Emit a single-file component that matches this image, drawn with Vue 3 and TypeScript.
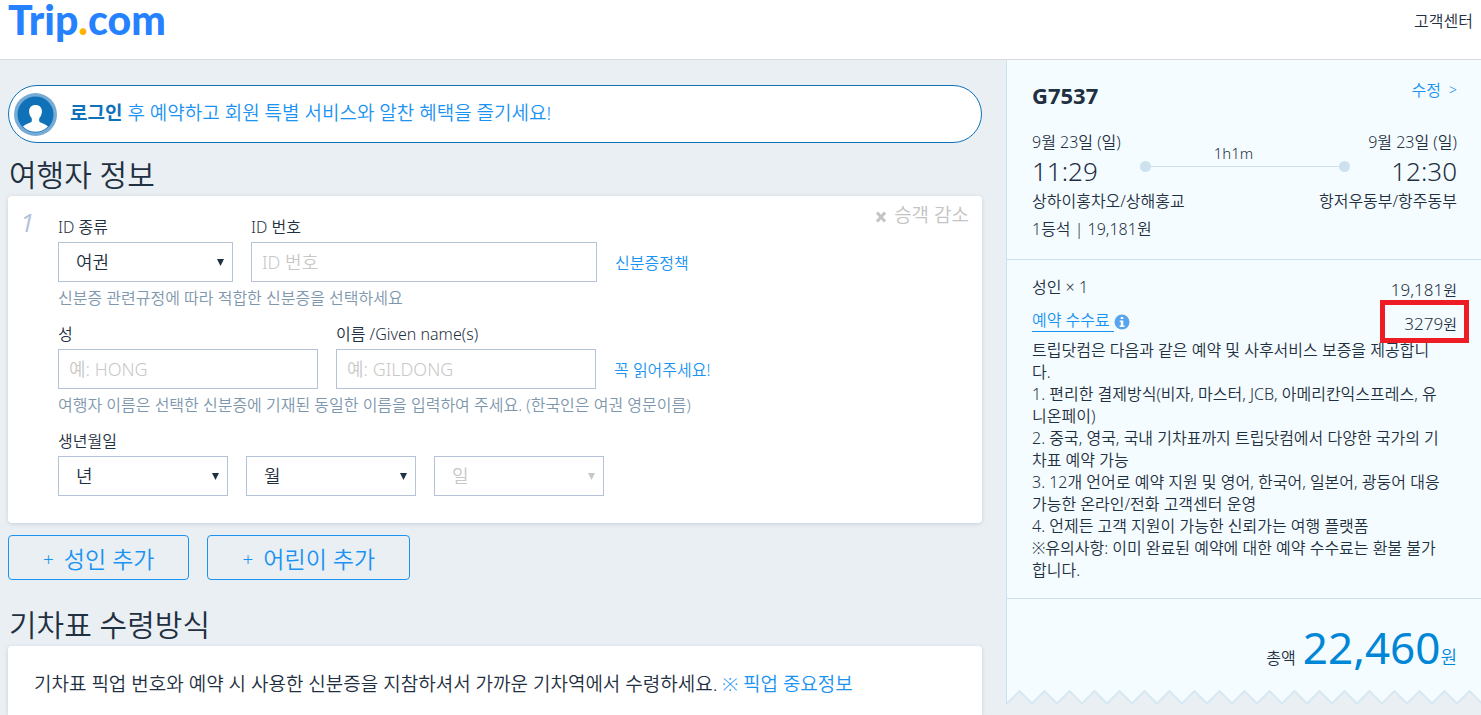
<script setup lang="ts">
import { ref } from 'vue'

const idType = ref('여권')
const year = ref('')
const month = ref('')
const day = ref('')

const guarantee: string[] = [
  '트립닷컴은 다음과 같은 예약 및 사후서비스 보증을 제공합니',
  '다.',
  '1. 편리한 결제방식(비자, 마스터, JCB, 아메리칸익스프레스, 유',
  '니온페이)',
  '2. 중국, 영국, 국내 기차표까지 트립닷컴에서 다양한 국가의 기',
  '차표 예약 가능',
  '3. 12개 언어로 예약 지원 및 영어, 한국어, 일본어, 광둥어 대응',
  '가능한 온라인/전화 고객센터 운영',
  '4. 언제든 고객 지원이 가능한 신뢰가는 여행 플랫폼',
  '※유의사항: 이미 완료된 예약에 대한 예약 수수료는 환불 불가',
  '합니다.',
]
</script>

<template>
  <div class="page">
    <header class="header">
      <a class="logo" href="#">Trip<span class="dot">.</span>com</a>
      <a class="support" href="#">고객센터</a>
    </header>

    <div class="layout">
      <main class="content">
        <div class="banner">
          <svg class="avatar" viewBox="0 0 43 43" aria-hidden="true">
            <circle cx="21.500" cy="21.500" r="21.500" fill="#76abd5" />
            <circle cx="21.500" cy="21.500" r="18" fill="#0f72b9" />
            <path
              d="M21.500 12c-4.200 0-6.500 2.800-6.400 6.400.1 3 1 4.600 2.200 6.100.7 1 .8 3.300.2 4.300-.8 1.300-5.500 1.700-8.500 4.700a17.500 17.500 0 0 0 25 0c-3-3-7.700-3.400-8.500-4.700-.6-1-.5-3.300.2-4.300 1.200-1.500 2.100-3.100 2.200-6.100.1-3.600-2.200-6.400-6.400-6.400z"
              fill="#fff"
            />
          </svg>
          <p><a class="login" href="#">로그인</a> 후 예약하고 회원 특별 서비스와 알찬 혜택을 즐기세요!</p>
        </div>

        <h2 class="title">여행자 정보</h2>
        <section class="card traveler">
          <span class="index">1</span>
          <button class="remove" type="button">
            <svg viewBox="0 0 12 12" aria-hidden="true"><path d="M2 1.500 10 10.500M10 1.500 2 10.500" stroke="#c4c4c4" stroke-width="3" /></svg>
            승객 감소
          </button>

          <div class="row">
            <div class="field id-type">
              <label for="id-type">ID 종류</label>
              <div class="select">
                <select id="id-type" v-model="idType"><option>여권</option></select>
                <svg viewBox="0 0 8 8" aria-hidden="true"><path d="M0 0h7L3.500 7z" /></svg>
              </div>
            </div>
            <div class="field id-number">
              <label for="id-number">ID 번호</label>
              <input id="id-number" type="text" placeholder="ID 번호" />
            </div>
            <a class="side-link" href="#">신분증정책</a>
          </div>
          <p class="hint">신분증 관련규정에 따라 적합한 신분증을 선택하세요</p>

          <div class="row">
            <div class="field name">
              <label for="surname">성</label>
              <input id="surname" type="text" placeholder="예: HONG" />
            </div>
            <div class="field name">
              <label for="given">이름 /Given name(s)</label>
              <input id="given" type="text" placeholder="예: GILDONG" />
            </div>
            <a class="side-link" href="#">꼭 읽어주세요!</a>
          </div>
          <p class="hint">여행자 이름은 선택한 신분증에 기재된 동일한 이름을 입력하여 주세요. (한국인은 여권 영문이름)</p>

          <label class="birth-label" for="year">생년월일</label>
          <div class="row">
            <div class="select date">
              <select id="year" v-model="year"><option value="">년</option></select>
              <svg viewBox="0 0 8 8" aria-hidden="true"><path d="M0 0h7L3.500 7z" /></svg>
            </div>
            <div class="select date">
              <select v-model="month" aria-label="월"><option value="">월</option></select>
              <svg viewBox="0 0 8 8" aria-hidden="true"><path d="M0 0h7L3.500 7z" /></svg>
            </div>
            <div class="select date disabled">
              <select v-model="day" aria-label="일" disabled><option value="">일</option></select>
              <svg viewBox="0 0 8 8" aria-hidden="true"><path d="M0 0h7L3.500 7z" /></svg>
            </div>
          </div>
        </section>

        <div class="add-buttons">
          <button type="button"><span class="plus">+</span><span>성인 추가</span></button>
          <button type="button"><span class="plus">+</span><span>어린이 추가</span></button>
        </div>

        <h2 class="title">기차표 수령방식</h2>
        <section class="card pickup">
          <p>기차표 픽업 번호와 예약 시 사용한 신분증을 지참하셔서 가까운 기차역에서 수령하세요. <a href="#">※ 픽업 중요정보</a></p>
        </section>
      </main>

      <aside class="summary">
        <section class="trip">
          <div class="train">
            <h3>G7537</h3>
            <a class="edit" href="#">수정<span class="gt">&gt;</span></a>
          </div>
          <div class="times">
            <div>
              <p>9월 23일 (일)</p>
              <p class="time">11:29</p>
            </div>
            <div class="duration">
              <span>1h1m</span>
              <div class="line"><i></i><i></i></div>
            </div>
            <div class="arrive">
              <p>9월 23일 (일)</p>
              <p class="time">12:30</p>
            </div>
          </div>
          <div class="stations"><span>상하이홍차오/상해홍교</span><span>항저우동부/항주동부</span></div>
          <p class="seat">1등석 | 19,181원</p>
        </section>

        <section class="prices">
          <div class="price"><span>성인 × 1</span><span class="amount">19,181<small>원</small></span></div>
          <div class="price">
            <a class="fee" href="#"><span>예약 수수료&nbsp;</span><svg viewBox="0 0 16 16" aria-hidden="true">
              <circle cx="8" cy="8" r="7.500" fill="#58a4ee" />
              <path d="M6.700 3h2.600v2H6.700zM5.700 6.500h3.600v5h1.200V13H5.600v-1.500h1.200V8H5.700z" fill="#fff" />
            </svg></a>
            <span class="amount marked">3279<small>원</small></span>
          </div>
          <p class="guarantee"><template v-for="line in guarantee" :key="line">{{ line }}<br /></template></p>
        </section>

        <section class="total"><span>총액</span><strong>22,460</strong><span class="won">원</span></section>

        <svg class="zigzag" aria-hidden="true">
          <defs>
            <pattern id="teeth" width="25" height="14" patternUnits="userSpaceOnUse">
              <path d="M0 14 12.500 1 25 14z" fill="#eaeff3" />
              <path d="M-1 14.500 12.500 1 26 14.500" fill="none" stroke="#d6e8f2" stroke-width="2" />
            </pattern>
          </defs>
          <rect width="100%" height="14" fill="url(#teeth)" />
        </svg>
      </aside>
    </div>
  </div>
</template>

<style>
html {
  background: #eaeff3;
}
</style>

<style scoped>
.page {
  display: flex;
  flex-direction: column;
  min-height: 100vh;
  font: 350 16px/22px "Noto Sans", "Noto Sans CJK KR", sans-serif;
  color: #1f3041;
}
.page * {
  box-sizing: border-box;
}
p,
h2,
h3 {
  margin: 0;
  font-weight: inherit;
}
a {
  color: #1b93f2;
  text-decoration: none;
}
button,
input,
select {
  font: inherit;
  color: inherit;
}
.header {
  display: flex;
  justify-content: space-between;
  height: 60px;
  padding: 0 8px;
  background: #fff;
  border-bottom: 1px solid #d5dbe0;
}
.logo {
  font: 900 41px/40px Lato, sans-serif;
  color: #2681ff;
}
.logo .dot {
  color: #ffb400;
}
.support {
  padding-top: 10px;
  color: inherit;
}
.layout {
  display: flex;
  flex: 1;
  gap: 24px;
  padding-left: 8px;
}
.content {
  display: flex;
  flex-direction: column;
  flex: 1;
  min-width: 0;
  padding-top: 25px;
}
.banner {
  display: flex;
  align-items: center;
  gap: 13px;
  height: 58px;
  padding: 0 5px;
  background: #fff;
  border: 1px solid #0f72b9;
  border-radius: 29px;
  font-size: 19px;
  color: #1b93f2;
}
.banner p {
  padding-bottom: 2px;
}
.avatar {
  width: 43px;
  height: 43px;
}
.login {
  font-weight: 700;
  color: #0f72b9;
}
.title {
  height: 53px;
  padding: 0 1px;
  font-size: 30px;
  line-height: 64px;
}
.card {
  background: #fff;
  border-radius: 4px;
  box-shadow: 0 1px 4px rgba(60, 90, 120, 0.2);
}
.traveler {
  position: relative;
  height: 327px;
  padding: 20px 50px;
}
.index {
  position: absolute;
  top: 10px;
  left: 12px;
  font: italic 400 26px/32px "Open Sans", sans-serif;
  color: #b4c3d8;
}
.remove {
  position: absolute;
  top: 8px;
  right: 13px;
  display: flex;
  align-items: center;
  gap: 7px;
  padding: 0;
  border: 0;
  background: none;
  font-size: 19px;
  color: #c4c4c4;
}
.remove svg {
  width: 12px;
  height: 12px;
  margin-top: 4px;
}
.row {
  display: flex;
  gap: 18px;
}
.field {
  display: flex;
  flex-direction: column;
  gap: 4px;
}
.id-type {
  width: 175px;
}
.id-number {
  width: 346px;
}
.name {
  width: 260px;
}
input,
select {
  width: 100%;
  height: 40px;
  margin: 0;
  border: 1px solid #b4c3d8;
  border-radius: 0;
  background: #fff;
  font-size: 18px;
}
input {
  padding: 0 10px;
}
input::placeholder {
  color: #c8c8c8;
  opacity: 1;
}
select {
  padding: 0 17px;
  appearance: none;
}
.select {
  position: relative;
}
.select svg {
  position: absolute;
  top: 17px;
  right: 8px;
  width: 8px;
  height: 8px;
  fill: #1f3041;
  pointer-events: none;
}
.date {
  width: 170px;
}
.disabled select {
  color: #c8c8c8;
  opacity: 1;
}
.disabled svg {
  fill: #c8c8c8;
}
.side-link {
  align-self: flex-end;
  margin-bottom: 8px;
}
.hint {
  height: 41px;
  padding-top: 5px;
  color: #7e97ad;
}
.birth-label {
  display: block;
  margin-bottom: 4px;
}
.add-buttons {
  display: flex;
  gap: 18px;
  padding-top: 12px;
}
.add-buttons button {
  display: flex;
  align-items: center;
  gap: 10px;
  height: 45px;
  padding: 2px 34px 0;
  border: 1px solid #1b93f2;
  border-radius: 4px;
  background: none;
  font-size: 23px;
  color: #1b93f2;
}
.add-buttons .plus {
  font-size: 19px;
}
.add-buttons + .title {
  height: 66px;
  line-height: 90px;
}
.pickup {
  flex: 1;
  padding: 24px 26px 0;
  border-radius: 4px 4px 0 0;
  font-size: 19px;
  line-height: 28px;
}
.summary {
  width: 475px;
}
.summary section {
  background: #f4fcff;
  border-left: 1px solid #c9e2ee;
  border-bottom: 1px solid #c9e2ee;
  padding: 0 24px 0 25px;
}
.trip {
  height: 200px;
}
.train {
  display: flex;
  justify-content: space-between;
  padding-top: 19px;
}
.train h3 {
  font-size: 22px;
  font-weight: 700;
  line-height: 32px;
}
.edit {
  display: flex;
  gap: 8px;
}
.gt {
  font-size: 14px;
}
.times {
  display: flex;
  justify-content: space-between;
  padding-top: 20px;
}
.time {
  font-size: 26px;
  line-height: 36px;
}
.arrive {
  text-align: right;
}
.duration {
  width: 210px;
  padding-top: 11px;
  text-align: center;
}
.duration span {
  padding-right: 22px;
  font-size: 15px;
}
.line {
  display: flex;
  justify-content: space-between;
  align-items: center;
  height: 1px;
  margin-top: 2px;
  background: #cde2ee;
}
.line i {
  width: 11px;
  height: 11px;
  border-radius: 50%;
  background: #cde2ee;
}
.stations {
  display: flex;
  justify-content: space-between;
  padding-top: 1px;
}
.seat {
  margin-top: 6px;
}
.summary .prices {
  height: 339px;
  padding-top: 16px;
}
.price {
  display: flex;
  justify-content: space-between;
  height: 34px;
}
.amount {
  position: relative;
  padding-top: 3px;
  font-size: 17px;
}
.amount small {
  font-size: 15px;
}
.marked::after {
  content: '';
  box-sizing: border-box;
  position: absolute;
  top: -10px;
  right: -12px;
  width: 89px;
  height: 43px;
  border: 5px solid #ee1c25;
}
.fee {
  display: flex;
  align-items: flex-start;
}
.fee span {
  border-bottom: 1px solid #1b93f2;
  line-height: 21px;
}
.fee svg {
  width: 16px;
  height: 16px;
  margin-top: 4px;
}
.guarantee {
  margin-top: -5px;
  white-space: nowrap;
}
.summary .total {
  display: flex;
  justify-content: flex-end;
  align-items: baseline;
  height: 91px;
  padding-top: 20px;
  border-bottom: 0;
}
.total strong {
  margin-left: 7px;
  font-size: 44px;
  font-weight: 400;
  line-height: 56px;
  color: #0086d6;
}
.won {
  font-size: 18px;
  color: #0086d6;
}
.zigzag {
  display: block;
  width: 100%;
  height: 14px;
  background: #f4fcff;
  border-left: 1px solid #c9e2ee;
}
</style>
